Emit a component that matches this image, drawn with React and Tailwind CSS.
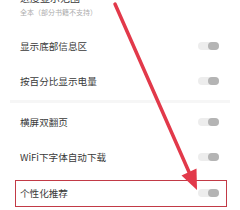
import React from 'react';

const Toggle = () => (
    <div className="w-[21px] h-[8px] rounded-full bg-[#ededed] flex justify-end">
        <div className="w-[11px] h-[8px] rounded-full bg-[#b4b4b4]" />
    </div>
);

const Row = ({ label }) => (
    <div className="h-[35px] flex items-center justify-between pl-[20px] pr-[21px]">
        <span className="text-[9.6px] text-[#3a3a3a]">{label}</span>
        <Toggle />
    </div>
);

const App = () => {
    return (
        <div
            className="relative w-[240px] h-[210px] bg-white overflow-hidden"
            style={{ fontFamily: '"Noto Sans CJK SC", "Noto Sans", sans-serif' }}
        >
            <div className="h-[28.5px] pl-[20px] flex flex-col">
                <span className="text-[10px] leading-[12px] text-[#3a3a3a] -mt-[8px]">进度显示范围</span>
                <span className="text-[7px] leading-[10px] text-[#adadad] mt-[3px]">全本（部分书籍不支持）</span>
            </div>
            <Row label="显示底部信息区" />
            <Row label="按百分比显示电量" />
            <div className="h-[6px] flex items-center">
                <div className="mx-[10px] h-[3px] w-full bg-[#f6f6f6]" />
            </div>
            <Row label="横屏双翻页" />
            <Row label="WiFi下字体自动下载" />
            <div className="h-[1px]" />
            <Row label="个性化推荐" />

            {/* annotation */}
            <div className="absolute left-[15px] top-[180px] w-[212px] h-[27px] border-[1.5px] border-[#c23a46]" />
            <svg className="absolute inset-0" width="240" height="210" viewBox="0 0 240 210">
                <line x1="115" y1="4" x2="189" y2="172" stroke="#e2394a" strokeWidth="3.5" strokeLinecap="round" />
                <polygon points="197,190 196.5,168.5 181.5,175.5" fill="#e2394a" />
            </svg>
        </div>
    );
};

export default App;
